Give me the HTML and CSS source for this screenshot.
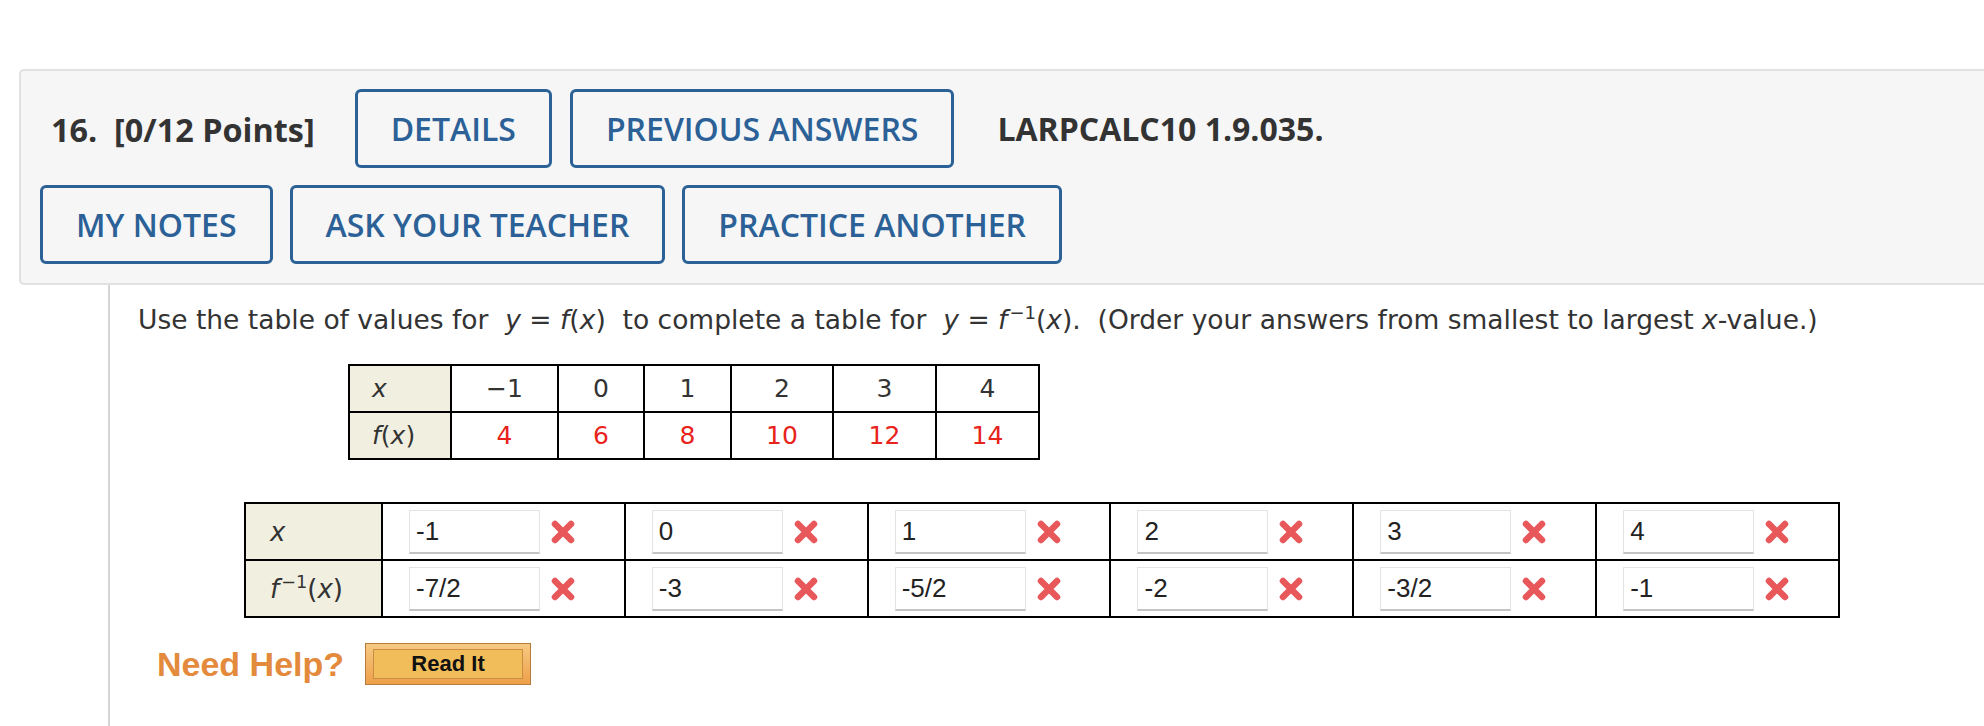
FILE: index.html
```html
<!DOCTYPE html>
<html>
<head>
<meta charset="utf-8">
<link rel="stylesheet" href="styles.css">
</head>
<body>
<div class="panel">
  <div class="row">
    <span class="title">16.&nbsp; [0/12 Points]</span>
    <span class="btn btn-details">DETAILS</span>
    <span class="btn btn-prev">PREVIOUS ANSWERS</span>
    <span class="ref">LARPCALC10 1.9.035.</span>
  </div>
  <div class="row row2">
    <span class="btn">MY NOTES</span>
    <span class="btn">ASK YOUR TEACHER</span>
    <span class="btn">PRACTICE ANOTHER</span>
  </div>
</div>
<div class="content">
  <p class="question">Use the table of values for &nbsp;<i>y</i> = <i>f</i>(<i>x</i>)&nbsp; to complete a table for &nbsp;<i>y</i> = <i>f</i><sup>−1</sup>(<i>x</i>).&nbsp; (Order your answers from smallest to largest <i>x</i>-value.)</p>
  <table class="t1">
    <tr>
      <th class="c0"><i>x</i></th>
      <td class="c1">−1</td><td class="c2">0</td><td class="c3">1</td><td class="c4">2</td><td class="c5">3</td><td class="c6">4</td>
    </tr>
    <tr>
      <th><i>f</i>(<i>x</i>)</th>
      <td class="red">4</td><td class="red">6</td><td class="red">8</td><td class="red">10</td><td class="red">12</td><td class="red">14</td>
    </tr>
  </table>
  <table class="t2">
    <tr>
      <th class="h"><i>x</i></th>
      <td><div class="cell"><span class="inp">-1</span><svg class="xic" viewBox="0 0 26 26"><path d="M5 5L21 21M21 5L5 21"/></svg></div></td>
      <td><div class="cell"><span class="inp">0</span><svg class="xic" viewBox="0 0 26 26"><path d="M5 5L21 21M21 5L5 21"/></svg></div></td>
      <td><div class="cell"><span class="inp">1</span><svg class="xic" viewBox="0 0 26 26"><path d="M5 5L21 21M21 5L5 21"/></svg></div></td>
      <td><div class="cell"><span class="inp">2</span><svg class="xic" viewBox="0 0 26 26"><path d="M5 5L21 21M21 5L5 21"/></svg></div></td>
      <td><div class="cell"><span class="inp">3</span><svg class="xic" viewBox="0 0 26 26"><path d="M5 5L21 21M21 5L5 21"/></svg></div></td>
      <td><div class="cell"><span class="inp">4</span><svg class="xic" viewBox="0 0 26 26"><path d="M5 5L21 21M21 5L5 21"/></svg></div></td>
    </tr>
    <tr>
      <th class="h"><i>f</i><sup>−1</sup>(<i>x</i>)</th>
      <td><div class="cell"><span class="inp">-7/2</span><svg class="xic" viewBox="0 0 26 26"><path d="M5 5L21 21M21 5L5 21"/></svg></div></td>
      <td><div class="cell"><span class="inp">-3</span><svg class="xic" viewBox="0 0 26 26"><path d="M5 5L21 21M21 5L5 21"/></svg></div></td>
      <td><div class="cell"><span class="inp">-5/2</span><svg class="xic" viewBox="0 0 26 26"><path d="M5 5L21 21M21 5L5 21"/></svg></div></td>
      <td><div class="cell"><span class="inp">-2</span><svg class="xic" viewBox="0 0 26 26"><path d="M5 5L21 21M21 5L5 21"/></svg></div></td>
      <td><div class="cell"><span class="inp">-3/2</span><svg class="xic" viewBox="0 0 26 26"><path d="M5 5L21 21M21 5L5 21"/></svg></div></td>
      <td><div class="cell"><span class="inp">-1</span><svg class="xic" viewBox="0 0 26 26"><path d="M5 5L21 21M21 5L5 21"/></svg></div></td>
    </tr>
  </table>
  <div class="help">
    <span class="need">Need Help?</span>
    <span class="readit"><span class="readit-in">Read It</span></span>
  </div>
</div>
</body>
</html>
```
FILE: styles.css
```css
html, body {
  margin: 0;
  padding: 0;
  background: #fff;
  height: 726px;
  overflow: hidden;
}
body {
  font-family: "Open Sans", sans-serif;
  color: #333;
}
.panel {
  margin: 69px 0 0 19px;
  border: 2px solid #e1e1e1;
  border-right: none;
  border-radius: 5px 0 0 5px;
  background: #f6f6f6;
  padding: 18px 0 19px 19px;
}
.row {
  display: flex;
  align-items: center;
  height: 79px;
}
.row2 {
  margin-top: 17px;
  gap: 17px;
}
.title {
  font-weight: 700;
  font-size: 32.4px;
  color: #333;
  margin-left: 11px;
  margin-right: 40px;
}
.btn {
  box-sizing: border-box;
  height: 79px;
  display: inline-flex;
  align-items: center;
  padding: 0 33px;
  border: 3px solid #2b6196;
  border-radius: 6px;
  color: #2b6196;
  font-weight: 600;
  font-size: 32px;
  background: #f6f6f6;
}
.btn-details {
  margin-right: 18px;
}
.ref {
  margin-left: 43px;
  font-weight: 700;
  font-size: 32px;
  color: #333;
}
.content {
  margin-left: 108px;
  border-left: 2px solid #d4d4d4;
  padding-left: 28px;
  height: 445px;
  font-family: "DejaVu Sans", Verdana, sans-serif;
}
.question {
  margin: 0;
  padding-top: 17px;
  font-size: 26.5px;
  line-height: 36px;
  color: #333;
}
.question sup, .t2 sup {
  font-size: 0.68em;
  line-height: 0;
  margin-left: 2px;
}
i {
  font-style: italic;
}
table {
  border-collapse: collapse;
  table-layout: fixed;
}
.t1 {
  margin-left: 210px;
  margin-top: 26px;
  width: 690px;
  font-size: 25px;
}
.t1 th, .t1 td {
  border: 2px solid #000;
  height: 45px;
  padding: 0;
  text-align: center;
  font-weight: normal;
  color: #333;
}
.t1 th {
  background: #f1efe0;
  text-align: left;
  padding-left: 22px;
}
.t1 .c0 { width: 78px; }
.t1 .c1 { width: 105px; }
.t1 .c2 { width: 84px; }
.t1 .c3 { width: 85px; }
.t1 .c4 { width: 100px; }
.t1 .c5 { width: 101px; }
.t1 .c6 { width: 101px; }
.t1 td.red {
  color: #e8231b;
}
.t2 {
  margin-left: 106px;
  margin-top: 42px;
  width: 1596px;
  font-size: 26px;
}
.t2 th, .t2 td {
  border: 2px solid #000;
  height: 55px;
  padding: 0;
}
.t2 th {
  width: 111px;
  background: #f1efe0;
  text-align: left;
  padding-left: 24px;
  font-weight: normal;
  color: #333;
}
.cell {
  display: flex;
  align-items: center;
  padding-left: 26px;
}
.inp {
  box-sizing: border-box;
  width: 131px;
  height: 44px;
  border: 1px solid #e4e4e4;
  border-bottom: 2px solid #c4c4c4;
  background: #fff;
  font-family: "Liberation Sans", Arial, sans-serif;
  font-size: 26px;
  color: #222;
  display: flex;
  align-items: center;
  padding-left: 6px;
}
.xic {
  width: 26px;
  height: 26px;
  margin-left: 10px;
}
.xic path {
  stroke: #e8585a;
  stroke-width: 6.5;
  stroke-linecap: round;
  fill: none;
}
.help {
  display: flex;
  align-items: center;
  margin-top: 25px;
  margin-left: 19px;
}
.need {
  font-family: "Liberation Sans", Arial, sans-serif;
  font-weight: 700;
  font-size: 34px;
  color: #e38a3c;
  margin-right: 21px;
}
.readit {
  box-sizing: border-box;
  width: 166px;
  height: 42px;
  border: 1px solid #b57c3c;
  background: linear-gradient(#f6c982, #eea04a);
  padding: 5px 7px;
  display: flex;
}
.readit-in {
  flex: 1;
  border: 1px solid #c98d44;
  background: #f1bd5a;
  font-family: "Liberation Sans", Arial, sans-serif;
  font-weight: 700;
  font-size: 22px;
  color: #111;
  display: flex;
  align-items: center;
  justify-content: center;
}
```
